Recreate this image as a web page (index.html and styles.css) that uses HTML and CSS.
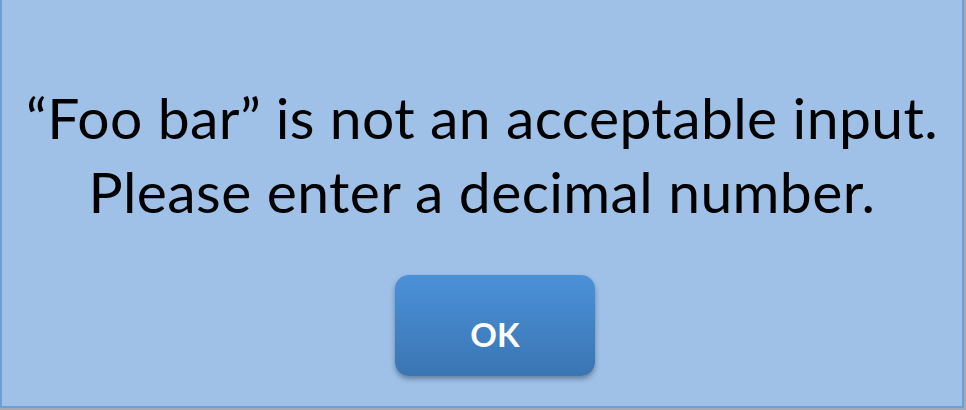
FILE: index.html
```html
<!DOCTYPE html>
<html lang="en">
<head>
<meta charset="utf-8">
<title>Invalid input</title>
<link rel="stylesheet" href="styles.css">
</head>
<body>
<div class="frame">
  <div class="dialog">
    <p class="message">“Foo bar” is not an acceptable input.<br>Please enter a decimal number.</p>
    <button class="ok-button" type="button">OK</button>
  </div>
</div>
</body>
</html>
```

FILE: styles.css
```css
html, body {
  margin: 0;
  padding: 0;
}
body {
  width: 966px;
  height: 410px;
  overflow: hidden;
}
.frame {
  box-sizing: border-box;
  width: 966px;
  height: 410px;
  background: #a2abb5;
  padding: 0 2px 2px 0;
  display: flex;
}
.dialog {
  box-sizing: border-box;
  flex: 1;
  background: #9fc1e7;
  border-left: 2px solid #6d9ed6;
  border-right: 2px solid #6d9ed6;
  border-bottom: 2px solid #6d9ed6;
  display: flex;
  flex-direction: column;
  align-items: center;
  padding-top: 80px;
}
.message {
  margin: 0;
  font-family: Lato, "Liberation Sans", sans-serif;
  font-size: 57px;
  letter-spacing: 0.4px;
  line-height: 74px;
  color: #000;
  text-align: center;
}
.ok-button {
  margin-top: 47px;
  margin-left: 26px;
  width: 200px;
  height: 101px;
  border: none;
  border-radius: 14px;
  background: linear-gradient(#4b91d8, #3a75b3);
  box-shadow: 0 3px 5px rgba(30, 50, 80, 0.45);
  color: #fff;
  font-family: Lato, "Liberation Sans", sans-serif;
  font-weight: 700;
  font-size: 33px;
  padding: 16px 0 0 0;
  cursor: pointer;
}
```
